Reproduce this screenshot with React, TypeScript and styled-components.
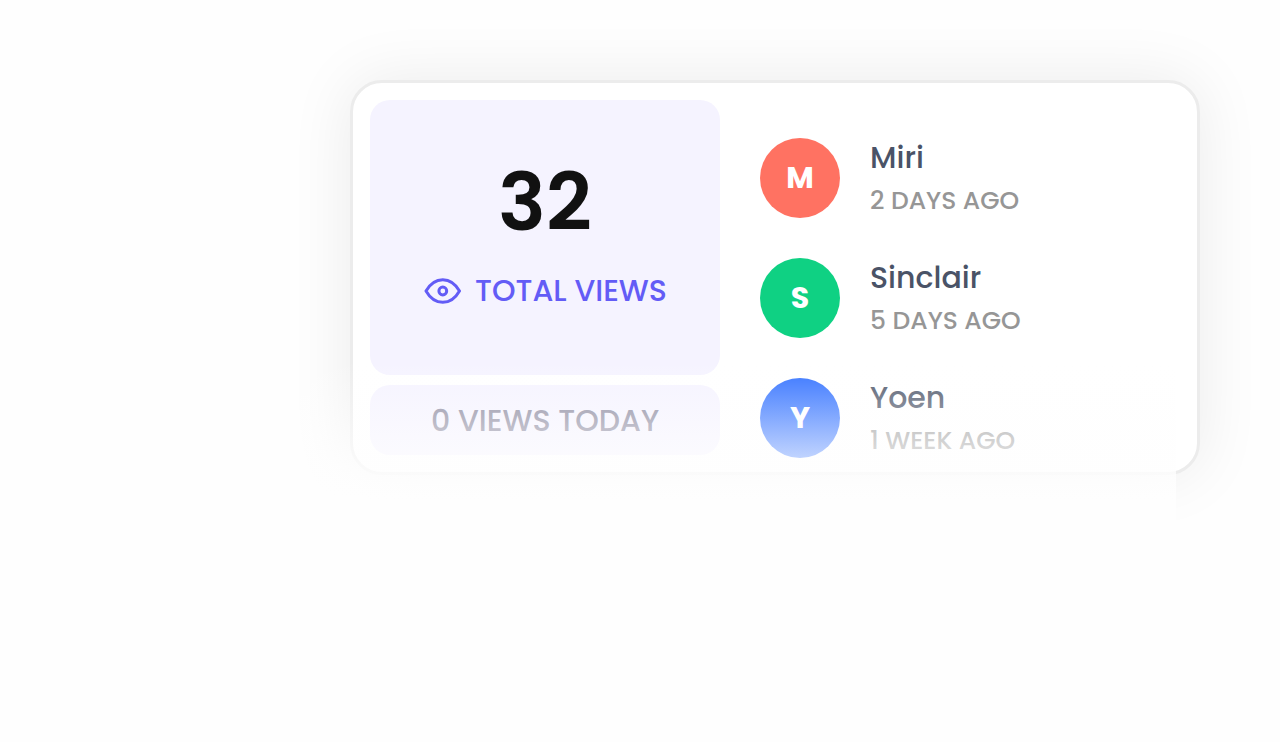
import React from 'react';
import styled, { createGlobalStyle } from 'styled-components';

const GlobalStyle = createGlobalStyle`
  *, *::before, *::after { box-sizing: border-box; }
  body {
    margin: 0;
    background: #fefefe;
    font-family: Poppins, Lato, sans-serif;
    font-weight: 500;
  }
`;

const Page = styled.main`
  padding: 80px 80px 80px 350px;
`;

const Card = styled.section`
  position: relative;
  display: flex;
  gap: 40px;
  padding: 17px;
  border: 3px solid #ececec;
  border-radius: 32px;
  background: #fff;
  box-shadow: 0 0 64px rgba(0, 0, 0, 0.08);
`;

const Fade = styled.div`
  position: absolute;
  top: 277px;
  right: 21px;
  bottom: -80px;
  left: -53px;
  background: linear-gradient(rgba(254, 254, 254, 0), #fefefe 140px);
  pointer-events: none;
`;

const Stats = styled.div`
  flex: 0 1 350px;
  display: flex;
  flex-direction: column;
  gap: 10px;
`;

const Panel = styled.div`
  display: flex;
  flex-direction: column;
  align-items: center;
  border-radius: 20px;
  background: #f5f3ff;
`;

const TotalPanel = styled(Panel)`
  padding: 52px 20px 64px;
`;

const TodayPanel = styled(Panel)`
  padding: 16px 20px 14px;
  color: #85839a;
  font-size: 30px;
  line-height: 40px;
`;

const Total = styled.strong`
  color: #111;
  font-size: 80px;
  font-weight: 600;
  line-height: 100px;
`;

const TotalLabel = styled.span`
  display: flex;
  align-items: center;
  gap: 14px;
  margin-top: 19px;
  color: #635cf6;
  font-size: 30px;
  line-height: 40px;
  white-space: nowrap;
`;

const Visitors = styled.ul`
  flex: 1;
  display: flex;
  flex-direction: column;
  gap: 40px;
  height: 355px;
  margin: 0;
  padding: 38px 0 0;
  list-style: none;
`;

const Visitor = styled.li`
  display: flex;
  align-items: center;
  gap: 30px;
`;

const Avatar = styled.span<{ $color: string }>`
  display: flex;
  flex: none;
  align-items: center;
  justify-content: center;
  width: 80px;
  height: 80px;
  border-radius: 50%;
  background: ${({ $color }) => $color};
  color: #fff;
  font-size: 30px;
  font-weight: 700;
`;

const Details = styled.div`
  display: flex;
  flex-direction: column;
  gap: 6px;
`;

const Name = styled.span`
  color: #4a5367;
  font-size: 30px;
  line-height: 40px;
`;

const Time = styled.span`
  color: #969696;
  font-size: 25px;
  line-height: 34px;
`;

const visitors = [
  { name: 'Miri', time: '2 DAYS AGO', color: '#ff7262' },
  { name: 'Sinclair', time: '5 DAYS AGO', color: '#0fd183' },
  { name: 'Yoen', time: '1 WEEK AGO', color: '#2f6fff' },
];

const EyeIcon = () => (
  <svg width="38" height="28" viewBox="0 0 38 28" fill="none" stroke="currentColor" strokeWidth="3" strokeLinejoin="round" aria-hidden="true">
    <path d="M3 14C7 7 13 2.700 19.800 2.700S32.500 7 36.500 14C32.500 21 26.500 25.300 19.800 25.300S7 21 3 14Z" />
    <circle cx="19.800" cy="14" r="3.900" />
  </svg>
);

export default function App() {
  return (
    <>
      <GlobalStyle />
      <Page>
        <Card>
          <Stats>
            <TotalPanel>
              <Total>32</Total>
              <TotalLabel>
                <EyeIcon />
                TOTAL VIEWS
              </TotalLabel>
            </TotalPanel>
            <TodayPanel>0 VIEWS TODAY</TodayPanel>
          </Stats>
          <Visitors>
            {visitors.map(({ name, time, color }) => (
              <Visitor key={name}>
                <Avatar $color={color}>{name[0]}</Avatar>
                <Details>
                  <Name>{name}</Name>
                  <Time>{time}</Time>
                </Details>
              </Visitor>
            ))}
          </Visitors>
          <Fade />
        </Card>
      </Page>
    </>
  );
}
